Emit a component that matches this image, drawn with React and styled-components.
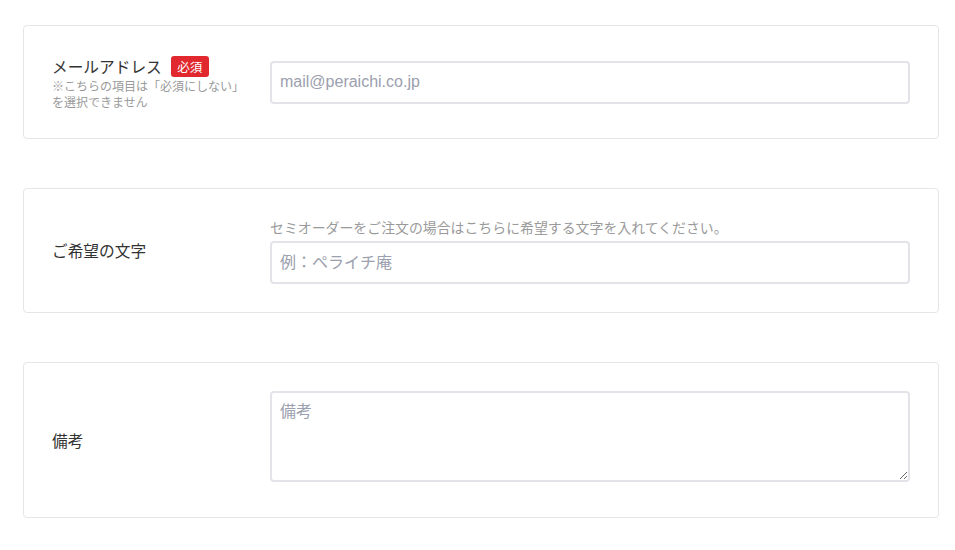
import styled, { createGlobalStyle } from "styled-components"

const fields = [
  {
    label: "メールアドレス",
    required: true,
    note: "※こちらの項目は「必須にしない」を選択できません",
    placeholder: "mail@peraichi.co.jp",
  },
  {
    label: "ご希望の文字",
    help: "セミオーダーをご注文の場合はこちらに希望する文字を入れてください。",
    placeholder: "例：ペライチ庵",
  },
  {
    label: "備考",
    placeholder: "備考",
    multiline: true,
  },
]

function App() {
  return (
    <>
      <GlobalStyle />
      <Form>
        {fields.map((f) => (
          <Card key={f.label}>
            <LabelCol>
              <LabelRow>
                <Label>{f.label}</Label>
                {f.required && <Badge>必須</Badge>}
              </LabelRow>
              {f.note && <Note>{f.note}</Note>}
            </LabelCol>
            <FieldCol>
              {f.help && <Help>{f.help}</Help>}
              {f.multiline ? (
                <TextArea placeholder={f.placeholder} />
              ) : (
                <Input type="text" placeholder={f.placeholder} />
              )}
            </FieldCol>
          </Card>
        ))}
      </Form>
    </>
  )
}

const GlobalStyle = createGlobalStyle`
  body {
    margin: 0;
    background: #ffffff;
    font-family: "Noto Sans CJK JP", "Noto Sans", sans-serif;
    color: #333333;
  }
`

const Form = styled.div`
  display: flex;
  flex-direction: column;
  gap: 49px;
  padding: 25px 16px 0 23px;
`

const Card = styled.div`
  display: flex;
  align-items: center;
  padding: 28px;
  border: 1px solid #e6e6e6;
  border-radius: 4px;
  background: #fff;
`

const LabelCol = styled.div`
  width: 218px;
  flex-shrink: 0;
`

const LabelRow = styled.div`
  display: flex;
  align-items: center;
  gap: 9px;
  height: 24px;
`

const Label = styled.span`
  font-size: 15.7px;
  color: #333;
`

const Badge = styled.span`
  display: inline-block;
  background: #e0282e;
  color: #fff;
  font-size: 12.5px;
  line-height: 21px;
  padding: 0 6.5px;
  border-radius: 3px;
`

const Note = styled.p`
  margin: 0;
  width: 200px;
  font-size: 12px;
  line-height: 16px;
  color: #9a9a9a;
`

const FieldCol = styled.div`
  flex: 1;
  display: flex;
  flex-direction: column;
`

const Help = styled.p`
  margin: 0 0 4px;
  font-size: 13.9px;
  line-height: 20px;
  color: #9a9a9a;
`

const fieldBase = `
  box-sizing: border-box;
  width: 100%;
  border: 2px solid #e3e4ea;
  border-radius: 4px;
  padding: 8px;
  font-family: "Liberation Sans", "Noto Sans CJK JP", sans-serif;
  font-size: 16px;
  color: #333;
  outline: none;
  &::placeholder {
    color: #9ba0ae;
  }
`

const Input = styled.input`
  ${fieldBase}
  height: 43px;
`

const TextArea = styled.textarea`
  ${fieldBase}
  display: block;
  height: 91px;
  margin-bottom: 7px;
  line-height: 22px;
`

export default App
